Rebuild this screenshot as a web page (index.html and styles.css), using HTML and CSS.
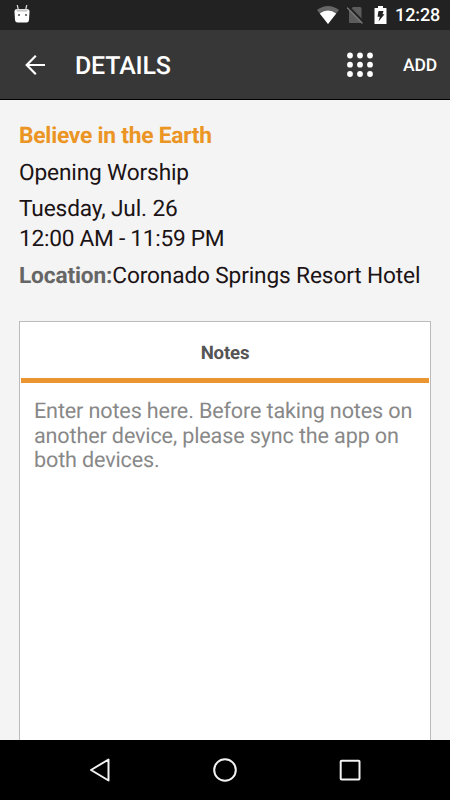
FILE: index.html
```html
<!DOCTYPE html>
<html lang="en">
<head>
<meta charset="utf-8">
<title>Details</title>
<link rel="stylesheet" href="styles.css">
</head>
<body>
<div class="status-bar">
  <svg class="mascot" width="16" height="18" viewBox="0 0 16 18"><path d="M3.200 0l1 4M12.800 0l-1 4" stroke="#ddd" stroke-width="1.200"/><path d="M0.500 6.500Q0.500 4 3 4H13Q15.500 4 15.500 6.500L15 15Q14.800 17.500 12.500 17.500H3.500Q1.200 17.500 1 15Z" fill="#fff"/><path d="M2 4.600H14L13 6.500H3Z" fill="#c4c4c4"/><path d="M4 9h2v2H4zM11 9h2v2h-2z" fill="#777"/></svg>
  <svg class="wifi" width="22" height="18" viewBox="0 0 22 18"><path d="M0 4Q11-4 22 4L11 18Z" fill="#666"/><path d="M2.800 7.600Q11 1.500 19.200 7.600L11 18Z" fill="#fff"/></svg>
  <svg class="sim" width="17" height="18" viewBox="0 0 17 18"><path d="M6 1H13Q14.500 1 14.500 2.500V17H3Q2 17 2 16V4.500Z" fill="#5c5c5c"/><path d="M1 0L17 16.500" stroke="#222" stroke-width="2"/><path d="M0 1.500L15.500 17.500" stroke="#777" stroke-width="1.300"/></svg>
  <svg class="battery" width="13" height="18" viewBox="0 0 13 18"><path d="M4 0H9V2H12Q12.500 2 12.500 2.600V17.400Q12.500 18 12 18H1Q.5 18 .5 17.400V2.600Q.5 2 1 2H4Z" fill="#fff"/><path d="M4.500 5H9.500L8.500 8.200H10.500L4.500 15.500L5.800 10.800H3.500Z" fill="#222"/></svg>
  <span class="clock">12:28</span>
</div>
<header class="app-bar">
  <svg class="back" width="20" height="20" viewBox="0 0 20 20" fill="none" stroke="#fff" stroke-width="2.200"><path d="M10.800 .8L1.700 10L10.800 19.200M1.700 10H20"/></svg>
  <h1 class="title">DETAILS</h1>
  <svg class="grid" width="26" height="26" viewBox="0 0 26 26" fill="#fff"><circle cx="3" cy="3.500" r="2.900"/><circle cx="13" cy="3.500" r="2.900"/><circle cx="23" cy="3.500" r="2.900"/><circle cx="3" cy="12.700" r="2.900"/><circle cx="13" cy="12.700" r="2.900"/><circle cx="23" cy="12.700" r="2.900"/><circle cx="3" cy="22" r="2.900"/><circle cx="13" cy="22" r="2.900"/><circle cx="23" cy="22" r="2.900"/></svg>
  <span class="add">ADD</span>
</header>
<main class="content">
  <h2 class="event-name">Believe in the Earth</h2>
  <p class="event-type">Opening Worship</p>
  <p class="when">Tuesday, Jul. 26<br><span class="time">12:00 AM - 11:59 PM</span></p>
  <p class="location"><b>Location:</b>Coronado Springs Resort Hotel</p>
  <section class="notes">
    <h3 class="notes-title">Notes</h3>
    <p class="notes-text">Enter notes here. Before taking notes on<br>another device, please sync the app on<br>both devices.</p>
  </section>
</main>
<nav class="nav-bar">
  <svg width="24" height="28" viewBox="0 0 24 28"><path d="M20.500 3.500V24.500L3 14Z"/></svg>
  <svg width="28" height="28" viewBox="0 0 28 28"><circle cx="14" cy="14" r="10.800"/></svg>
  <svg width="24" height="28" viewBox="0 0 24 28"><rect x="2.700" y="4.700" width="18.800" height="18.800" rx=".8"/></svg>
</nav>
</body>
</html>
```
FILE: styles.css
```css
* { box-sizing: border-box; margin: 0; padding: 0; }
body {
  width: 450px;
  height: 800px;
  display: flex;
  flex-direction: column;
  overflow: hidden;
  background: #f4f4f4;
  color: #1b1315;
  font-family: Roboto, "Liberation Sans", sans-serif;
  text-rendering: geometricPrecision;
}
svg { display: block; flex: none; }
.status-bar {
  height: 30px;
  flex: none;
  display: flex;
  align-items: center;
  padding: 0 10px 0 14px;
  background: #222;
  color: #fff;
}
.mascot { margin: -2px auto 0 0; }
.wifi { margin-right: 8px; }
.sim { margin-right: 10px; }
.battery { margin-right: 8px; }
.clock { width: 45px; padding-top: 2px; font-size: 18px; line-height: 30px; font-weight: 500; letter-spacing: -0.1px; white-space: nowrap; }
.app-bar {
  height: 70px;
  flex: none;
  display: flex;
  align-items: center;
  padding: 0 13px 0 25px;
  background: #373737;
  border-bottom: 1px solid #000;
  color: #fff;
}
.title { margin: 4px 0 0 30px; font-size: 25px; line-height: 30px; font-weight: 500; letter-spacing: -0.2px; }
.grid { margin: 1px 30px 0 auto; }
.add { width: 34px; padding-top: 3px; font-size: 17.5px; font-weight: 500; letter-spacing: -0.1px; white-space: nowrap; }
.content {
  flex: 1;
  min-height: 0;
  display: flex;
  flex-direction: column;
  padding: 21px 19px 0;
  font-size: 22.7px;
  line-height: 30px;
  letter-spacing: -0.15px;
  white-space: nowrap;
}
.event-name { font-size: 22.8px; line-height: 30px; letter-spacing: -0.25px; color: #eb9525; }
.event-type { margin-top: 7px; }
.when { margin-top: 6px; }
.location { margin-top: 7px; }
.time { letter-spacing: -0.27px; }
.location b { color: #666; }
.notes {
  flex: 1;
  margin-top: 30px;
  background: #fff;
  border: 1px solid #bbb;
  border-bottom: 0;
}
.notes-title {
  height: 61px;
  margin: 0 1px;
  border-bottom: 5px solid #eb9530;
  text-align: center;
  font-size: 18.6px;
  line-height: 63px;
  color: #555;
}
.notes-text { padding: 17px 14px; font-size: 21.6px; line-height: 24.5px; color: #888; }
.nav-bar {
  height: 60px;
  flex: none;
  display: flex;
  align-items: center;
  justify-content: space-between;
  padding: 0 88px;
  background: #000;
}
.nav-bar svg { fill: none; stroke: #f2f2f2; stroke-width: 2; stroke-linejoin: round; }
```
